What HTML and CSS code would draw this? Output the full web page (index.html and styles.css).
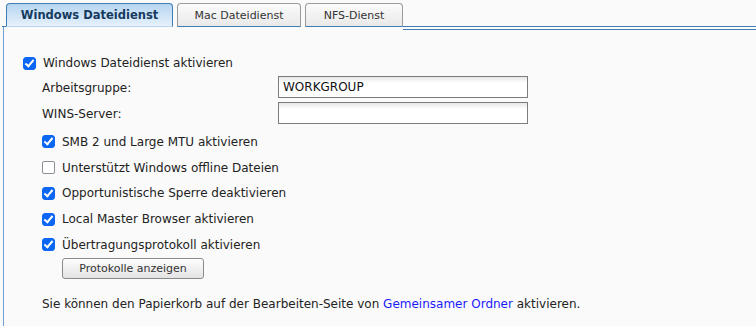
FILE: index.html
```html
<!DOCTYPE html>
<html lang="de">
<head>
<meta charset="utf-8">
<link rel="stylesheet" href="styles.css">
</head>
<body>
<div class="tabs">
  <div class="tab active">Windows Dateidienst</div>
  <div class="tab">Mac Dateidienst</div>
  <div class="tab">NFS-Dienst</div>
  <div class="tab-fill"></div>
</div>
<div class="panel">
  <label class="check top"><span class="box on"></span>Windows Dateidienst aktivieren</label>
  <div class="sub">
    <div class="field"><span class="flabel">Arbeitsgruppe:</span><span class="input">WORKGROUP</span></div>
    <div class="field"><span class="flabel">WINS-Server:</span><span class="input"></span></div>
    <label class="check first"><span class="box on"></span>SMB 2 und Large MTU aktivieren</label>
    <label class="check"><span class="box"></span>Unterstützt Windows offline Dateien</label>
    <label class="check"><span class="box on"></span>Opportunistische Sperre deaktivieren</label>
    <label class="check"><span class="box on"></span>Local Master Browser aktivieren</label>
    <label class="check"><span class="box on"></span>Übertragungsprotokoll aktivieren</label>
    <div class="btnrow"><span class="button">Protokolle anzeigen</span></div>
    <p class="note">Sie können den Papierkorb auf der Bearbeiten-Seite von <a class="link">Gemeinsamer Ordner</a> aktivieren.</p>
  </div>
</div>
</body>
</html>
```
FILE: styles.css
```css
html, body {
  margin: 0;
  padding: 0;
  background: #fafafa;
  font-family: "DejaVu Sans", Verdana, sans-serif;
  font-size: 12px;
  color: #222;
  width: 756px;
  height: 326px;
  overflow: hidden;
}
.tabs {
  display: flex;
  align-items: flex-end;
  padding: 3px 0 0 2px;
  height: 24px;
}
.tabs::before {
  content: "";
  width: 4px;
  height: 1px;
  background: #3f7cb4;
}
.tab {
  box-sizing: border-box;
  height: 24px;
  border: 1px solid #9a9a9a;
  border-bottom: 1px solid #3f7cb4;
  border-radius: 4px 4px 0 0;
  background: linear-gradient(#fbfbfb, #e9e9e9);
  color: #333;
  display: flex;
  align-items: center;
  justify-content: center;
  font-size: 11px;
  margin-right: 4px;
}
.tab:nth-child(2) { width: 124px; }
.tab:nth-child(3) { width: 98px; }
.tab.active {
  width: 167px;
  border-color: #3f7cb4;
  border-bottom-color: transparent;
  background: linear-gradient(#b6d5f1, #e6f1fb);
  color: #153a5e;
  font-weight: bold;
  font-size: 11.5px;
}
.tab-fill {
  flex: 1;
  height: 1px;
  background: #3f7cb4;
  box-shadow: 0 3px 0 #3f7cb4;
  margin-left: -4px;
}
.panel {
  border-left: 1px solid #6f9fd0;
  margin-left: 3px;
  height: 299px;
  padding: 26px 0 0 19px;
  box-sizing: border-box;
}
.check {
  display: flex;
  align-items: center;
  height: 25.75px;
  color: #222;
}
.check.top { height: 20px; margin-bottom: 1px; }
.check.first { margin-top: 3px; }
.box {
  box-sizing: border-box;
  width: 13px;
  height: 13px;
  border: 1.5px solid #8d8d95;
  border-radius: 2px;
  background: #fff;
  margin-right: 7px;
  position: relative;
  flex: none;
}
.box.on {
  background: #0b67f3;
  border-color: #0b67f3;
  border-radius: 3px;
}
.box.on::after {
  content: "";
  position: absolute;
  left: 3px;
  top: 0px;
  width: 3px;
  height: 7px;
  border: solid #fff;
  border-width: 0 2px 2px 0;
  transform: rotate(40deg);
}
.sub {
  padding-left: 19px;
}
.field {
  display: flex;
  align-items: center;
  height: 26px;
}
.flabel {
  width: 236px;
  padding-top: 2px;
}
.input {
  box-sizing: border-box;
  width: 250px;
  height: 22px;
  border: 1px solid #7c7c7c;
  background: linear-gradient(#e6e6e6, #ffffff 6px);
  padding: 3px 4px;
  color: #111;
}
.btnrow {
  padding-left: 20px;
  display: flex;
}
.button {
  box-sizing: border-box;
  width: 142px;
  height: 21px;
  border: 1px solid #8a8a8a;
  border-radius: 3px;
  background: linear-gradient(#fdfdfd, #e3e3e3);
  display: flex;
  align-items: center;
  justify-content: center;
  font-size: 11px;
  color: #333;
}
.note {
  margin: 18px 0 0 0;
  color: #222;
}
.link { color: #1a1aff; }
```
